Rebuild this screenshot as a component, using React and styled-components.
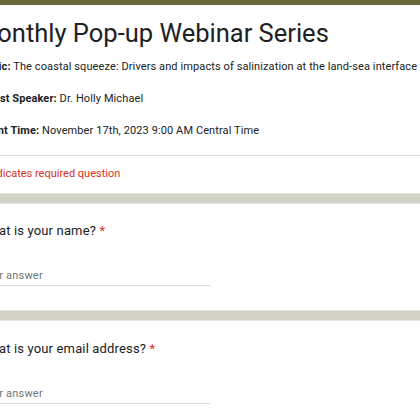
import React from 'react';
import styled, { createGlobalStyle } from 'styled-components';

const GlobalStyle = createGlobalStyle`
  html, body {
    margin: 0;
    padding: 0;
    background-color: #d3d2c6;
    font-family: Roboto, "Liberation Sans", Arial, sans-serif;
    color: #202124;
    overflow: hidden;
  }
`;

const Page = styled.div`
  display: flex;
  flex-direction: column;
  gap: 11px;
  width: 520px;
  margin-left: -44px;
  height: 420px;
`;

const Card = styled.div`
  background-color: #fff;
  border-top: ${(p) => (p.accent ? `5px solid ${p.accent}` : 'none')};
  box-shadow: 0 0 0 1px #e6e5de;
`;

const HeaderTop = styled.div`
  padding: 12px 24px 0;
`;

const Title = styled.h1`
  margin: 0 0 10px -5px;
  font-size: 25.5px;
  line-height: 32px;
  font-weight: 400;
  white-space: nowrap;
`;

const Info = styled.p`
  margin: 0 0 17px;
  font-size: 11px;
  line-height: 15px;
  letter-spacing: 0.1px;
  white-space: nowrap;
`;

const Divider = styled.div`
  height: 1px;
  background-color: #dadce0;
`;

const Required = styled.div`
  padding: 10px 24px 12px;
  font-size: 11px;
  line-height: 15px;
  color: #d93025;
`;

const Question = styled.div`
  padding: ${(p) => p.top}px 24px 24px;
`;

const Label = styled.div`
  font-size: 13px;
  line-height: 20px;
  letter-spacing: 0.15px;
`;

const Star = styled.span`
  color: #d93025;
`;

const Answer = styled.div`
  width: 230px;
  margin-top: 27px;
  padding-bottom: 2px;
  border-bottom: 1px solid #dadce0;
  font-size: 11px;
  line-height: 15px;
  color: #70757a;
  letter-spacing: 0.2px;
`;

const questions = [
  { text: 'What is your name?', top: 17 },
  { text: 'What is your email address?', top: 18 },
];

const App = () => (
  <>
    <GlobalStyle />
    <Page>
      <Card accent="#6b6a3c">
        <HeaderTop>
          <Title>Monthly Pop-up Webinar Series</Title>
          <Info>
            <b>Topic:</b> The coastal squeeze: Drivers and impacts of salinization at the land-sea interface
          </Info>
          <Info>
            <b>Guest Speaker:</b> Dr. Holly Michael
          </Info>
          <Info>
            <b>Event Time:</b> November 17th, 2023 9:00 AM Central Time
          </Info>
        </HeaderTop>
        <Divider />
        <Required>* Indicates required question</Required>
      </Card>
      {questions.map((q) => (
        <Card key={q.text}>
          <Question top={q.top}>
            <Label>
              {q.text} <Star>*</Star>
            </Label>
            <Answer>Your answer</Answer>
          </Question>
        </Card>
      ))}
    </Page>
  </>
);

export default App;
